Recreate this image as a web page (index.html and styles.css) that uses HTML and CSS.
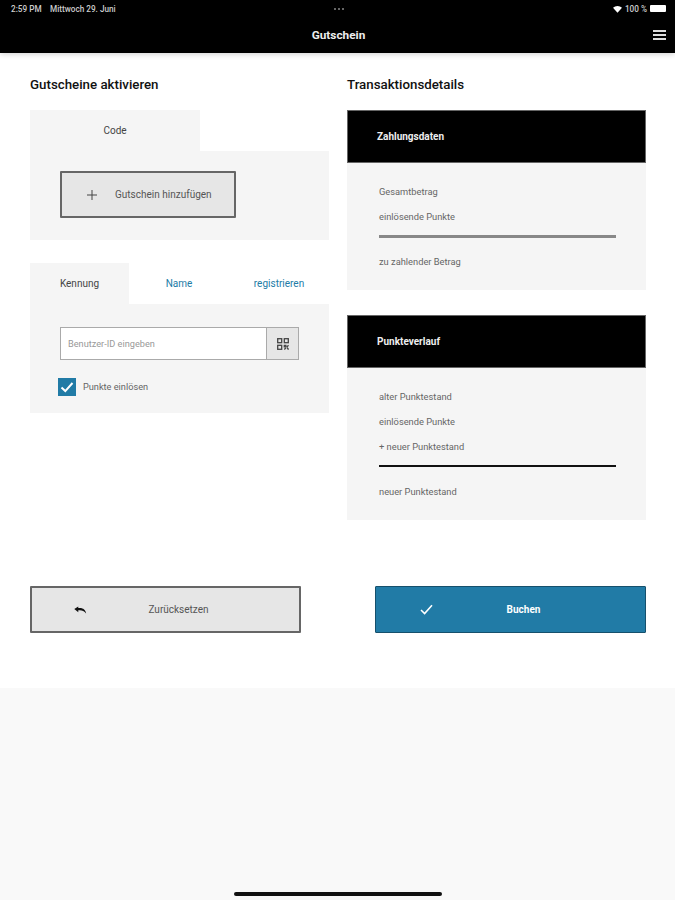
FILE: index.html
```html
<!DOCTYPE html>
<html lang="de">
<head>
    <meta charset="UTF-8">
    <meta name="viewport" content="width=device-width, initial-scale=1.0">
    <title>Gutschein</title>
    <link rel="stylesheet" href="styles.css">
</head>
<body>
<header class="topbar">
    <div class="status">
        <span class="status-left"><span class="status-time">2:59 PM</span>Mittwoch 29. Juni</span>
        <span class="status-dots"><i></i><i></i><i></i></span>
        <span class="status-right">
            <svg class="wifi" width="11" height="9" viewBox="0 0 11 9"><path d="M0 3 A8 8 0 0 1 11 3 L5.5 9 Z" fill="#fff"/></svg>
            100 %
            <span class="battery"></span>
        </span>
    </div>
    <div class="nav">
        <span class="nav-title">Gutschein</span>
        <span class="burger"><i></i><i></i><i></i></span>
    </div>
</header>

<main class="content">
    <div class="columns">
        <section class="col">
            <h2>Gutscheine aktivieren</h2>

            <div class="tabs code-tabs">
                <div class="tab active">Code</div>
            </div>
            <div class="panel code-panel">
                <button class="btn add-btn">
                    <svg width="10" height="10" viewBox="0 0 10 10"><path d="M5 0v10M0 5h10" stroke="#444" stroke-width="1"/></svg>
                    <span>Gutschein hinzufügen</span>
                </button>
            </div>

            <div class="tabs user-tabs">
                <div class="tab active">Kennung</div>
                <div class="tab link">Name</div>
                <div class="tab link">registrieren</div>
            </div>
            <div class="panel user-panel">
                <div class="id-row">
                    <input type="text" class="id-input" placeholder="Benutzer-ID eingeben">
                    <button class="qr-btn">
                        <svg width="12" height="12" viewBox="0 0 12 12" fill="none" stroke="#444" stroke-width="1.3">
                            <rect x="0.7" y="0.7" width="4" height="4"/>
                            <rect x="7.3" y="0.7" width="4" height="4"/>
                            <rect x="0.7" y="7.3" width="4" height="4"/>
                            <path d="M7.3 7.3h1.6v1.6h-1.6zM10 9.5l1.5 2M11.5 7.3l-1.5 1.6M7.3 11.5l1.5-1.5"/>
                        </svg>
                    </button>
                </div>
                <label class="check-row">
                    <span class="checkbox">
                        <svg width="14" height="12" viewBox="0 0 14 12"><path d="M1.5 6.5l3.8 3.6L12.5 2" fill="none" stroke="#fff" stroke-width="2"/></svg>
                    </span>
                    <span>Punkte einlösen</span>
                </label>
            </div>
        </section>

        <section class="col">
            <h2>Transaktionsdetails</h2>

            <div class="detail-head">Zahlungsdaten</div>
            <div class="detail-body pay-body">
                <p>Gesamtbetrag</p>
                <p>einlösende Punkte</p>
                <hr class="rule grey">
                <p>zu zahlender Betrag</p>
            </div>

            <div class="detail-head second">Punkteverlauf</div>
            <div class="detail-body points-body">
                <p>alter Punktestand</p>
                <p>einlösende Punkte</p>
                <p>+ neuer Punktestand</p>
                <hr class="rule dark">
                <p>neuer Punktestand</p>
            </div>
        </section>
    </div>

    <div class="actions">
        <button class="btn action reset">
            <svg width="15" height="8" viewBox="0 0 15 9"><path d="M5 0.5L0.5 3.5 5 7V4.8c3.5-.4 6.5.3 8.8 3.7C13.2 4 10 1.6 5 2.3z" fill="#111"/></svg>
            <span>Zurücksetzen</span>
        </button>
        <button class="btn action book">
            <svg width="13" height="11" viewBox="0 0 13 11"><path d="M1 6l3.6 3.5L12 1.2" fill="none" stroke="#fff" stroke-width="1.6"/></svg>
            <span>Buchen</span>
        </button>
    </div>
</main>

<footer class="bottom">
    <div class="home-bar"></div>
</footer>
</body>
</html>
```

FILE: styles.css
```css
* {
    box-sizing: border-box;
}
body {
    font-family: Roboto, "Liberation Sans", sans-serif;
    margin: 0;
    height: 900px;
    overflow: hidden;
    background-color: #fff;
    color: #444;
    display: flex;
    flex-direction: column;
}

/* top black bar */
.topbar {
    background-color: #000;
    color: #fff;
    height: 53px;
    padding: 0 9px 0 11px;
    box-shadow: 0 1px 6px rgba(0, 0, 0, 0.2);
}
.status {
    height: 17px;
    display: grid;
    grid-template-columns: 1fr auto 1fr;
    align-items: center;
    font-size: 8.2px;
    font-weight: 500;
    color: #ccc;
}
.status-time {
    display: inline-block;
    width: 39px;
}
.status-dots {
    display: flex;
    gap: 2px;
}
.status-dots i {
    width: 2px;
    height: 2px;
    border-radius: 50%;
    background-color: #888;
}
.status-right {
    display: flex;
    justify-content: flex-end;
    align-items: center;
    gap: 3px;
}
.wifi {
    width: 9px;
    height: 8px;
}
.battery {
    width: 16px;
    height: 7px;
    background-color: #fff;
    border-radius: 1px;
}
.nav {
    position: relative;
    height: 36px;
    display: flex;
    justify-content: center;
    align-items: center;
}
.nav-title {
    font-size: 11.8px;
    font-weight: 700;
    color: #eee;
}
.burger {
    position: absolute;
    right: 0;
    top: 13px;
    width: 13px;
    display: flex;
    flex-direction: column;
    gap: 2.5px;
}
.burger i {
    height: 1.5px;
    background-color: #ddd;
}

/* main content */
.content {
    padding: 0 29px 0 30px;
    flex: 0 0 635px;
}
.columns {
    display: grid;
    grid-template-columns: 299px 299px;
    gap: 18px;
}
h2 {
    font-size: 13.3px;
    font-weight: 500;
    color: #111;
    line-height: 16px;
    margin: 24px 0 17px;
}

/* tabs */
.tabs {
    display: flex;
    height: 41px;
    font-size: 10px;
}
.tab {
    display: flex;
    align-items: center;
    justify-content: center;
    padding-bottom: 1px;
}
.tab.active {
    background-color: #f5f5f5;
}
.tab.link {
    color: #217ba6;
    flex: 1;
}
.code-tabs .tab {
    width: 170px;
}
.user-tabs {
    margin-top: 23px;
}
.user-tabs .tab.active {
    width: 99px;
}
.panel {
    background-color: #f5f5f5;
}
.code-panel {
    height: 89px;
    padding: 20px 30px;
}
.user-panel {
    height: 109px;
    padding: 23px 30px 0;
}

/* buttons */
.btn {
    font-family: inherit;
    font-size: 10px;
    color: #555;
    background-color: #e6e6e6;
    border: 2px solid #666;
    border-radius: 1px;
    display: flex;
    align-items: center;
    padding: 0;
}
.add-btn {
    width: 176px;
    height: 47px;
    padding-left: 25px;
    gap: 18px;
}
.id-row {
    display: flex;
    height: 33px;
}
.id-input {
    width: 206px;
    height: 33px;
    font-family: inherit;
    font-size: 9.2px;
    padding: 0 7px;
    background-color: #fff;
    border: 1px solid #aaa;
    border-right: 0;
    border-radius: 0;
}
.id-input::placeholder {
    color: #999;
}
.qr-btn {
    width: 33px;
    height: 33px;
    padding: 0;
    background-color: #e6e6e6;
    border: 1px solid #aaa;
    display: flex;
    align-items: center;
    justify-content: center;
}
.check-row {
    display: flex;
    align-items: center;
    gap: 7px;
    margin: 18px 0 0 -2px;
    font-size: 9.2px;
    line-height: 16px;
    color: #666;
}
.checkbox {
    width: 18px;
    height: 18px;
    background-color: #217ba6;
    display: flex;
    align-items: center;
    justify-content: center;
}

/* transaction details */
.detail-head {
    height: 53px;
    background-color: #000;
    color: #eee;
    font-size: 10px;
    font-weight: 700;
    display: flex;
    align-items: center;
    padding-left: 29px;
    border: 1px solid #666;
}
.detail-head.second {
    margin-top: 25px;
}
.detail-body {
    background-color: #f5f5f5;
    padding: 22px 30px 0 32px;
    font-size: 9.3px;
    color: #666;
}
.detail-body p {
    margin: 0 0 11px;
    line-height: 14px;
}
.pay-body {
    height: 127px;
}
.points-body {
    height: 152px;
}
.rule {
    border: 0;
    width: 237px;
}
.rule.grey {
    height: 3px;
    margin: 2px 0 17px;
    background-color: #888;
}
.rule.dark {
    height: 2px;
    margin: 2px 0 18px;
    background-color: #111;
}

/* bottom actions */
.actions {
    display: flex;
    justify-content: space-between;
    margin-top: 66px;
}
.action {
    width: 271px;
    height: 47px;
    position: relative;
}
.action span {
    position: absolute;
    left: 26px;
    right: 0;
    text-align: center;
}
.reset {
    padding-left: 41px;
}
.book {
    padding-left: 44px;
    background-color: #217ba6;
    color: #fff;
    font-weight: 700;
    border: 1px solid #16506c;
}

.bottom {
    flex: 1;
    background-color: #f9f9f9;
    display: flex;
    justify-content: center;
    align-items: flex-end;
    padding-bottom: 4px;
}
.home-bar {
    width: 208px;
    height: 4px;
    background-color: #111;
    border-radius: 2px;
}
```
